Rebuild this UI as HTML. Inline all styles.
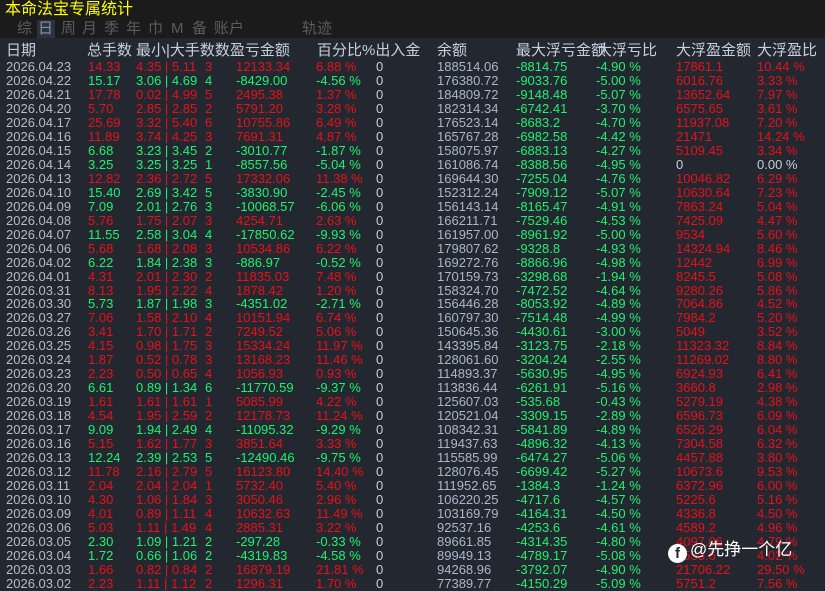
<!DOCTYPE html>
<html><head><meta charset="utf-8"><style>
*{margin:0;padding:0;box-sizing:border-box}
body{width:825px;height:590px;overflow:hidden;background:#232830;font-family:"Liberation Sans","Noto Sans CJK SC",sans-serif;position:relative}
#top{position:absolute;left:0;top:0;width:825px;height:38px;background:#1b1b1b}
#title{position:absolute;left:5px;top:0;color:#ffff00;font-size:16px;line-height:19px}
.tab{position:absolute;top:20px;color:#5c5c5c;font-size:15px;line-height:18px}
#sel{position:absolute;left:37px;top:20px;width:18px;height:18px;background:#2b3340}
#hdr{position:absolute;top:41px;left:0;height:20px;color:#c8cfdc;font-size:15px;line-height:20px;width:825px}
#hdr span{position:absolute;white-space:nowrap}
#rows{position:absolute;left:0;top:60px;width:825px}
.r{position:relative;width:825px;height:13.97px;font-size:13px;line-height:13px;white-space:nowrap}
.r span{position:absolute;top:0}
.d{left:6px;color:#b4bccc}
.a{left:88px}.b{left:136px}.n{left:205px}.p{left:236px}.q{left:316px}
.i{left:376px;color:#c8cfdc}.m{left:437px;color:#a9b6cc}
.l{left:516px;color:#20f070}.lp{left:596px;color:#20f070}
.g{left:676px;color:#e8101a}.gp{left:757px;color:#e8101a}
.R{color:#e8101a}.G{color:#20f070}
#wm{position:absolute;left:668px;top:539px;color:#fff;font-size:17px;line-height:22px}
#wm i{display:inline-block;width:19px;height:19px;border-radius:50%;background:#fff;vertical-align:-3px;margin-right:3px;position:relative;color:#232830;font-style:normal;font-weight:bold;font-size:15px;line-height:19px;text-align:center}
</style></head><body>
<div id="top"></div>
<div id="title">本命法宝专属统计</div>
<div id="sel"></div>
<span class="tab" style="left:17px">综</span>
<span class="tab" style="left:38px;color:#8a93a3">日</span>
<span class="tab" style="left:61px">周</span>
<span class="tab" style="left:82px">月</span>
<span class="tab" style="left:104px">季</span>
<span class="tab" style="left:126px">年</span>
<span class="tab" style="left:148px">巾</span>
<span class="tab" style="left:171px">M</span>
<span class="tab" style="left:192px">备</span>
<span class="tab" style="left:214px">账户</span>
<span class="tab" style="left:302px">轨迹</span>
<div id="hdr">
<span style="left:6px">日期</span>
<span style="left:87px">总手数</span>
<span style="left:136px">最小|大手数数盈亏金额</span>
<span style="left:317px">百分比%出入金</span>
<span style="left:437px">余额</span>
<span style="left:516px">最大浮亏金额</span>
<span style="left:597px">大浮亏比</span>
<span style="left:676px">大浮盈金额</span>
<span style="left:757px">大浮盈比</span>
</div>
<div id="rows">
<div class="r R"><span class="d">2026.04.23</span><span class="a">14.33</span><span class="b">4.35 | 5.11</span><span class="n">3</span><span class="p">12133.34</span><span class="q">6.88 %</span><span class="i">0</span><span class="m">188514.06</span><span class="l">-8814.75</span><span class="lp">-4.90 %</span><span class="g">17861.1</span><span class="gp">10.44 %</span></div>
<div class="r G"><span class="d">2026.04.22</span><span class="a">15.17</span><span class="b">3.06 | 4.69</span><span class="n">4</span><span class="p">-8429.00</span><span class="q">-4.56 %</span><span class="i">0</span><span class="m">176380.72</span><span class="l">-9033.76</span><span class="lp">-5.00 %</span><span class="g">6016.76</span><span class="gp">3.33 %</span></div>
<div class="r R"><span class="d">2026.04.21</span><span class="a">17.78</span><span class="b">0.02 | 4.99</span><span class="n">5</span><span class="p">2495.38</span><span class="q">1.37 %</span><span class="i">0</span><span class="m">184809.72</span><span class="l">-9148.48</span><span class="lp">-5.07 %</span><span class="g">13652.64</span><span class="gp">7.97 %</span></div>
<div class="r R"><span class="d">2026.04.20</span><span class="a">5.70</span><span class="b">2.85 | 2.85</span><span class="n">2</span><span class="p">5791.20</span><span class="q">3.28 %</span><span class="i">0</span><span class="m">182314.34</span><span class="l">-6742.41</span><span class="lp">-3.70 %</span><span class="g">6575.65</span><span class="gp">3.61 %</span></div>
<div class="r R"><span class="d">2026.04.17</span><span class="a">25.69</span><span class="b">3.32 | 5.40</span><span class="n">6</span><span class="p">10755.86</span><span class="q">6.49 %</span><span class="i">0</span><span class="m">176523.14</span><span class="l">-8683.2</span><span class="lp">-4.70 %</span><span class="g">11937.08</span><span class="gp">7.20 %</span></div>
<div class="r R"><span class="d">2026.04.16</span><span class="a">11.89</span><span class="b">3.74 | 4.25</span><span class="n">3</span><span class="p">7691.31</span><span class="q">4.87 %</span><span class="i">0</span><span class="m">165767.28</span><span class="l">-6982.58</span><span class="lp">-4.42 %</span><span class="g">21471</span><span class="gp">14.24 %</span></div>
<div class="r G"><span class="d">2026.04.15</span><span class="a">6.68</span><span class="b">3.23 | 3.45</span><span class="n">2</span><span class="p">-3010.77</span><span class="q">-1.87 %</span><span class="i">0</span><span class="m">158075.97</span><span class="l">-6883.13</span><span class="lp">-4.27 %</span><span class="g">5109.45</span><span class="gp">3.34 %</span></div>
<div class="r G"><span class="d">2026.04.14</span><span class="a">3.25</span><span class="b">3.25 | 3.25</span><span class="n">1</span><span class="p">-8557.56</span><span class="q">-5.04 %</span><span class="i">0</span><span class="m">161086.74</span><span class="l">-8388.56</span><span class="lp">-4.95 %</span><span class="g" style="color:#c8cfdc">0</span><span class="gp" style="color:#c8cfdc">0.00 %</span></div>
<div class="r R"><span class="d">2026.04.13</span><span class="a">12.82</span><span class="b">2.36 | 2.72</span><span class="n">5</span><span class="p">17332.06</span><span class="q">11.38 %</span><span class="i">0</span><span class="m">169644.30</span><span class="l">-7255.04</span><span class="lp">-4.76 %</span><span class="g">10046.82</span><span class="gp">6.29 %</span></div>
<div class="r G"><span class="d">2026.04.10</span><span class="a">15.40</span><span class="b">2.69 | 3.42</span><span class="n">5</span><span class="p">-3830.90</span><span class="q">-2.45 %</span><span class="i">0</span><span class="m">152312.24</span><span class="l">-7909.12</span><span class="lp">-5.07 %</span><span class="g">10630.64</span><span class="gp">7.23 %</span></div>
<div class="r G"><span class="d">2026.04.09</span><span class="a">7.09</span><span class="b">2.01 | 2.76</span><span class="n">3</span><span class="p">-10068.57</span><span class="q">-6.06 %</span><span class="i">0</span><span class="m">156143.14</span><span class="l">-8165.47</span><span class="lp">-4.91 %</span><span class="g">7863.24</span><span class="gp">5.04 %</span></div>
<div class="r R"><span class="d">2026.04.08</span><span class="a">5.76</span><span class="b">1.75 | 2.07</span><span class="n">3</span><span class="p">4254.71</span><span class="q">2.63 %</span><span class="i">0</span><span class="m">166211.71</span><span class="l">-7529.46</span><span class="lp">-4.53 %</span><span class="g">7425.09</span><span class="gp">4.47 %</span></div>
<div class="r G"><span class="d">2026.04.07</span><span class="a">11.55</span><span class="b">2.58 | 3.04</span><span class="n">4</span><span class="p">-17850.62</span><span class="q">-9.93 %</span><span class="i">0</span><span class="m">161957.00</span><span class="l">-8961.92</span><span class="lp">-5.00 %</span><span class="g">9534</span><span class="gp">5.60 %</span></div>
<div class="r R"><span class="d">2026.04.06</span><span class="a">5.68</span><span class="b">1.68 | 2.08</span><span class="n">3</span><span class="p">10534.86</span><span class="q">6.22 %</span><span class="i">0</span><span class="m">179807.62</span><span class="l">-9328.8</span><span class="lp">-4.93 %</span><span class="g">14324.94</span><span class="gp">8.46 %</span></div>
<div class="r G"><span class="d">2026.04.02</span><span class="a">6.22</span><span class="b">1.84 | 2.38</span><span class="n">3</span><span class="p">-886.97</span><span class="q">-0.52 %</span><span class="i">0</span><span class="m">169272.76</span><span class="l">-8866.96</span><span class="lp">-4.98 %</span><span class="g">12442</span><span class="gp">6.99 %</span></div>
<div class="r R"><span class="d">2026.04.01</span><span class="a">4.31</span><span class="b">2.01 | 2.30</span><span class="n">2</span><span class="p">11835.03</span><span class="q">7.48 %</span><span class="i">0</span><span class="m">170159.73</span><span class="l">-3298.68</span><span class="lp">-1.94 %</span><span class="g">8245.5</span><span class="gp">5.08 %</span></div>
<div class="r R"><span class="d">2026.03.31</span><span class="a">8.13</span><span class="b">1.95 | 2.22</span><span class="n">4</span><span class="p">1878.42</span><span class="q">1.20 %</span><span class="i">0</span><span class="m">158324.70</span><span class="l">-7472.52</span><span class="lp">-4.64 %</span><span class="g">9280.26</span><span class="gp">5.86 %</span></div>
<div class="r G"><span class="d">2026.03.30</span><span class="a">5.73</span><span class="b">1.87 | 1.98</span><span class="n">3</span><span class="p">-4351.02</span><span class="q">-2.71 %</span><span class="i">0</span><span class="m">156446.28</span><span class="l">-8053.92</span><span class="lp">-4.89 %</span><span class="g">7064.86</span><span class="gp">4.52 %</span></div>
<div class="r R"><span class="d">2026.03.27</span><span class="a">7.06</span><span class="b">1.58 | 2.10</span><span class="n">4</span><span class="p">10151.94</span><span class="q">6.74 %</span><span class="i">0</span><span class="m">160797.30</span><span class="l">-7514.48</span><span class="lp">-4.99 %</span><span class="g">7984.2</span><span class="gp">5.20 %</span></div>
<div class="r R"><span class="d">2026.03.26</span><span class="a">3.41</span><span class="b">1.70 | 1.71</span><span class="n">2</span><span class="p">7249.52</span><span class="q">5.06 %</span><span class="i">0</span><span class="m">150645.36</span><span class="l">-4430.61</span><span class="lp">-3.00 %</span><span class="g">5049</span><span class="gp">3.52 %</span></div>
<div class="r R"><span class="d">2026.03.25</span><span class="a">4.15</span><span class="b">0.98 | 1.75</span><span class="n">3</span><span class="p">15334.24</span><span class="q">11.97 %</span><span class="i">0</span><span class="m">143395.84</span><span class="l">-3123.75</span><span class="lp">-2.18 %</span><span class="g">11323.32</span><span class="gp">8.84 %</span></div>
<div class="r R"><span class="d">2026.03.24</span><span class="a">1.87</span><span class="b">0.52 | 0.78</span><span class="n">3</span><span class="p">13168.23</span><span class="q">11.46 %</span><span class="i">0</span><span class="m">128061.60</span><span class="l">-3204.24</span><span class="lp">-2.55 %</span><span class="g">11269.02</span><span class="gp">8.80 %</span></div>
<div class="r R"><span class="d">2026.03.23</span><span class="a">2.23</span><span class="b">0.50 | 0.65</span><span class="n">4</span><span class="p">1056.93</span><span class="q">0.93 %</span><span class="i">0</span><span class="m">114893.37</span><span class="l">-5630.95</span><span class="lp">-4.95 %</span><span class="g">6924.93</span><span class="gp">6.41 %</span></div>
<div class="r G"><span class="d">2026.03.20</span><span class="a">6.61</span><span class="b">0.89 | 1.34</span><span class="n">6</span><span class="p">-11770.59</span><span class="q">-9.37 %</span><span class="i">0</span><span class="m">113836.44</span><span class="l">-6261.91</span><span class="lp">-5.16 %</span><span class="g">3660.8</span><span class="gp">2.98 %</span></div>
<div class="r R"><span class="d">2026.03.19</span><span class="a">1.61</span><span class="b">1.61 | 1.61</span><span class="n">1</span><span class="p">5085.99</span><span class="q">4.22 %</span><span class="i">0</span><span class="m">125607.03</span><span class="l">-535.68</span><span class="lp">-0.43 %</span><span class="g">5279.19</span><span class="gp">4.38 %</span></div>
<div class="r R"><span class="d">2026.03.18</span><span class="a">4.54</span><span class="b">1.95 | 2.59</span><span class="n">2</span><span class="p">12178.73</span><span class="q">11.24 %</span><span class="i">0</span><span class="m">120521.04</span><span class="l">-3309.15</span><span class="lp">-2.89 %</span><span class="g">6596.73</span><span class="gp">6.09 %</span></div>
<div class="r G"><span class="d">2026.03.17</span><span class="a">9.09</span><span class="b">1.94 | 2.49</span><span class="n">4</span><span class="p">-11095.32</span><span class="q">-9.29 %</span><span class="i">0</span><span class="m">108342.31</span><span class="l">-5841.89</span><span class="lp">-4.89 %</span><span class="g">6526.29</span><span class="gp">6.04 %</span></div>
<div class="r R"><span class="d">2026.03.16</span><span class="a">5.15</span><span class="b">1.62 | 1.77</span><span class="n">3</span><span class="p">3851.64</span><span class="q">3.33 %</span><span class="i">0</span><span class="m">119437.63</span><span class="l">-4896.32</span><span class="lp">-4.13 %</span><span class="g">7304.58</span><span class="gp">6.32 %</span></div>
<div class="r G"><span class="d">2026.03.13</span><span class="a">12.24</span><span class="b">2.39 | 2.53</span><span class="n">5</span><span class="p">-12490.46</span><span class="q">-9.75 %</span><span class="i">0</span><span class="m">115585.99</span><span class="l">-6474.27</span><span class="lp">-5.06 %</span><span class="g">4457.88</span><span class="gp">3.80 %</span></div>
<div class="r R"><span class="d">2026.03.12</span><span class="a">11.78</span><span class="b">2.16 | 2.79</span><span class="n">5</span><span class="p">16123.80</span><span class="q">14.40 %</span><span class="i">0</span><span class="m">128076.45</span><span class="l">-6699.42</span><span class="lp">-5.27 %</span><span class="g">10673.6</span><span class="gp">9.53 %</span></div>
<div class="r R"><span class="d">2026.03.11</span><span class="a">2.04</span><span class="b">2.04 | 2.04</span><span class="n">1</span><span class="p">5732.40</span><span class="q">5.40 %</span><span class="i">0</span><span class="m">111952.65</span><span class="l">-1384.3</span><span class="lp">-1.24 %</span><span class="g">6372.96</span><span class="gp">6.00 %</span></div>
<div class="r R"><span class="d">2026.03.10</span><span class="a">4.30</span><span class="b">1.06 | 1.84</span><span class="n">3</span><span class="p">3050.46</span><span class="q">2.96 %</span><span class="i">0</span><span class="m">106220.25</span><span class="l">-4717.6</span><span class="lp">-4.57 %</span><span class="g">5225.6</span><span class="gp">5.16 %</span></div>
<div class="r R"><span class="d">2026.03.09</span><span class="a">4.01</span><span class="b">0.89 | 1.11</span><span class="n">4</span><span class="p">10632.63</span><span class="q">11.49 %</span><span class="i">0</span><span class="m">103169.79</span><span class="l">-4164.31</span><span class="lp">-4.50 %</span><span class="g">4336.8</span><span class="gp">4.50 %</span></div>
<div class="r R"><span class="d">2026.03.06</span><span class="a">5.03</span><span class="b">1.11 | 1.49</span><span class="n">4</span><span class="p">2885.31</span><span class="q">3.22 %</span><span class="i">0</span><span class="m">92537.16</span><span class="l">-4253.6</span><span class="lp">-4.61 %</span><span class="g">4589.2</span><span class="gp">4.96 %</span></div>
<div class="r G"><span class="d">2026.03.05</span><span class="a">2.30</span><span class="b">1.09 | 1.21</span><span class="n">2</span><span class="p">-297.28</span><span class="q">-0.33 %</span><span class="i">0</span><span class="m">89661.85</span><span class="l">-4314.35</span><span class="lp">-4.80 %</span><span class="g">4097.06</span><span class="gp">4.79 %</span></div>
<div class="r G"><span class="d">2026.03.04</span><span class="a">1.72</span><span class="b">0.66 | 1.06</span><span class="n">2</span><span class="p">-4319.83</span><span class="q">-4.58 %</span><span class="i">0</span><span class="m">89949.13</span><span class="l">-4789.17</span><span class="lp">-5.08 %</span><span class="g">3553.6</span><span class="gp">4.02 %</span></div>
<div class="r R"><span class="d">2026.03.03</span><span class="a">1.66</span><span class="b">0.82 | 0.84</span><span class="n">2</span><span class="p">16879.19</span><span class="q">21.81 %</span><span class="i">0</span><span class="m">94268.96</span><span class="l">-3792.07</span><span class="lp">-4.90 %</span><span class="g">21706.22</span><span class="gp">29.50 %</span></div>
<div class="r R"><span class="d">2026.03.02</span><span class="a">2.23</span><span class="b">1.11 | 1.12</span><span class="n">2</span><span class="p">1296.31</span><span class="q">1.70 %</span><span class="i">0</span><span class="m">77389.77</span><span class="l">-4150.29</span><span class="lp">-5.09 %</span><span class="g">5751.2</span><span class="gp">7.56 %</span></div>
</div>
<div id="wm"><i>f</i>@先挣一个亿</div>
</body></html>
